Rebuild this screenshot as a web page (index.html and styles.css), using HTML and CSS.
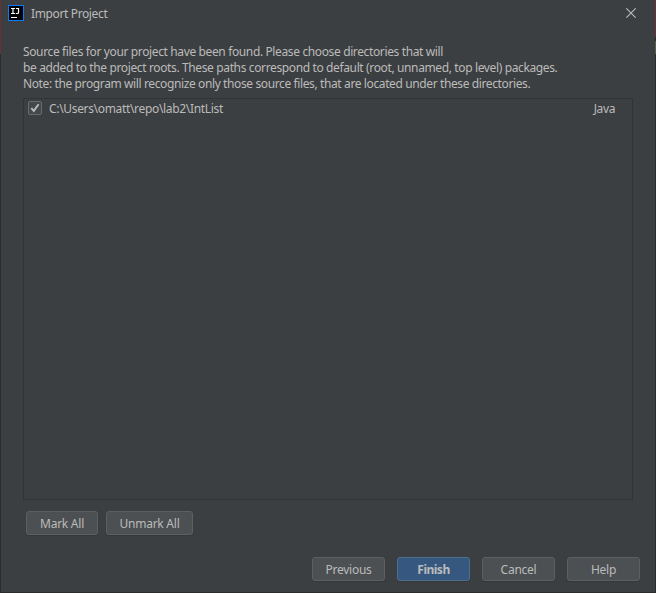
FILE: index.html
```html
<!DOCTYPE html>
<html lang="en">
<head>
<meta charset="utf-8">
<title>Import Project</title>
<link rel="stylesheet" href="styles.css">
</head>
<body>
<main class="dialog">
  <header class="titlebar">
    <svg class="logo" width="16" height="16" viewBox="0 0 16 16">
      <rect width="16" height="16" fill="#087cfa"/>
      <rect x="1" y="1" width="14" height="14" fill="#000"/>
      <path d="M3 3.5h4M5 3v6M3 8.5h4M8 3.5h3M10.5 3v4.5q0 1-1 1H7.8" fill="none" stroke="#fff" stroke-width="1.2"/>
      <path d="M3 12.5h6" stroke="#fff"/>
    </svg>
    <h1 class="title">Import Project</h1>
    <svg class="close" width="10" height="10" viewBox="0 0 10 10"><path d="M.3.3l9.4 9.4M9.7.3L.3 9.7" stroke="#b9babb" stroke-width="1.1"/></svg>
  </header>
  <section class="content">
    <p class="message">
      <span class="line">Source files for your project have been found. Please choose directories that will</span>
      <span class="line">be added to the project roots. These paths correspond to default (root, unnamed, top level) packages.</span>
      <span class="line third">Note: the program will recognize only those source files, that are located under these directories.</span>
    </p>
    <div class="list">
      <div class="row">
        <svg class="check" width="14" height="14" viewBox="0 0 14 14">
          <rect x=".5" y=".5" width="13" height="13" rx="1.5" fill="#43494a" stroke="#6b6b6b"/>
          <path d="M3.3 7.1l2.5 2.8 4.8-6.6" fill="none" stroke="#bbb" stroke-width="1.9"/>
        </svg>
        <span class="path">C:\Users\omatt\repo\lab2\IntList</span>
        <span class="kind">Java</span>
      </div>
    </div>
    <div class="marks">
      <button class="button mark">Mark All</button>
      <button class="button unmark">Unmark All</button>
    </div>
  </section>
  <footer class="actions">
    <button class="button">Previous</button>
    <button class="button primary">Finish</button>
    <button class="button">Cancel</button>
    <button class="button">Help</button>
  </footer>
</main>
</body>
</html>
```
FILE: styles.css
```css
* { box-sizing: border-box; }
body {
  margin: 0;
  width: 656px;
  height: 593px;
  overflow: hidden;
  padding: 0 1px 1px;
  background:
    linear-gradient(#6b3034 0 37px, #2b2b2b 37px 41px, #5a5d41 41px 54px, #2b2b2b 54px) right / 1px 100% no-repeat,
    linear-gradient(#6b3034 0 54px, #2b2b2b 54px);
  font: 12px/16px "Noto Sans", "Open Sans", sans-serif;
  letter-spacing: -0.37px;
  color: #bbb;
}
.dialog {
  height: 592px;
  background: #3c3f41;
  display: flex;
  flex-direction: column;
}
.titlebar {
  height: 28px;
  padding: 0 19px 0 7px;
  display: flex;
  align-items: center;
}
.logo { margin-top: -2px; }
.title {
  margin: 0 auto 0 7px;
  font-size: inherit;
  font-weight: 400;
}
.close { margin-top: -2px; }
.content { padding: 16px 22px 0; }
.message { margin: 0; }
.line { display: block; white-space: nowrap; }
.third { letter-spacing: -0.385px; }
.list {
  height: 402px;
  margin-top: 6px;
  border: 1px solid #313335;
}
.row {
  display: flex;
  align-items: center;
  height: 20px;
  padding: 0 17px 0 4px;
}
.check { margin-top: -3px; }
.path { margin: 0 auto 0 7px; letter-spacing: -0.33px; }
.marks { display: flex; gap: 8px; padding: 11px 3px 0; }
.button {
  width: 73px;
  height: 24px;
  padding: 1px 0 0;
  border: 1px solid #5e6060;
  border-radius: 3px;
  background: #4c5052;
  color: #bbb;
  font: inherit;
  letter-spacing: -0.25px;
  line-height: 22px;
  white-space: nowrap;
  box-shadow: 0 1px 1px #35383a;
}
.mark { width: 72px; }
.unmark { width: 87px; }
.primary {
  border-color: #4c708c;
  background: #365880;
  font-weight: 700;
  letter-spacing: -0.5px;
}
.actions {
  display: flex;
  justify-content: flex-end;
  gap: 12px;
  margin-top: auto;
  padding: 0 15px 11px;
}
```
